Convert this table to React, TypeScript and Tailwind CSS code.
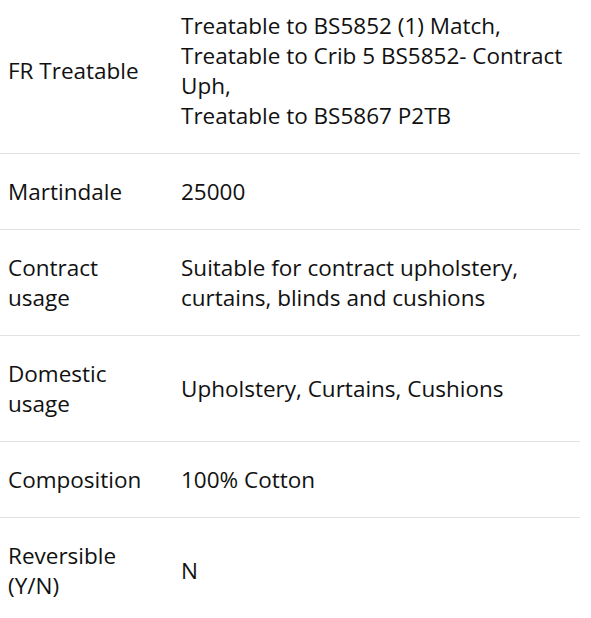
const ROWS: { label: string; value: string[] }[] = [
  {
    label: "FR Treatable",
    value: [
      "Treatable to BS5852 (1) Match,",
      "Treatable to Crib 5 BS5852- Contract Uph,",
      "Treatable to BS5867 P2TB",
    ],
  },
  { label: "Martindale", value: ["25000"] },
  { label: "Contract usage", value: ["Suitable for contract upholstery, curtains, blinds and cushions"] },
  { label: "Domestic usage", value: ["Upholstery, Curtains, Cushions"] },
  { label: "Composition", value: ["100% Cotton"] },
  { label: "Reversible (Y/N)", value: ["N"] },
];

export default function App() {
  return (
    <div className="w-[591px] h-[618px] overflow-hidden bg-white font-['Open_Sans',sans-serif] text-[22.5px] leading-[30px] text-[#111]">
      <div className="-mt-[12px] w-[580px]">
        {ROWS.map((row, i) => (
          <div
            key={row.label}
            className={`flex items-center ${i < ROWS.length - 1 ? "border-b border-[#e2e2e2]" : ""}`}
          >
            <div className="w-[173px] shrink-0 pl-2 pr-[25px] pt-[23px] pb-[22px]">{row.label}</div>
            <div className="flex-1 pl-2 pr-2 pt-[23px] pb-[22px]">
              {row.value.map((line) => (
                <div key={line}>{line}</div>
              ))}
            </div>
          </div>
        ))}
      </div>
    </div>
  );
}
